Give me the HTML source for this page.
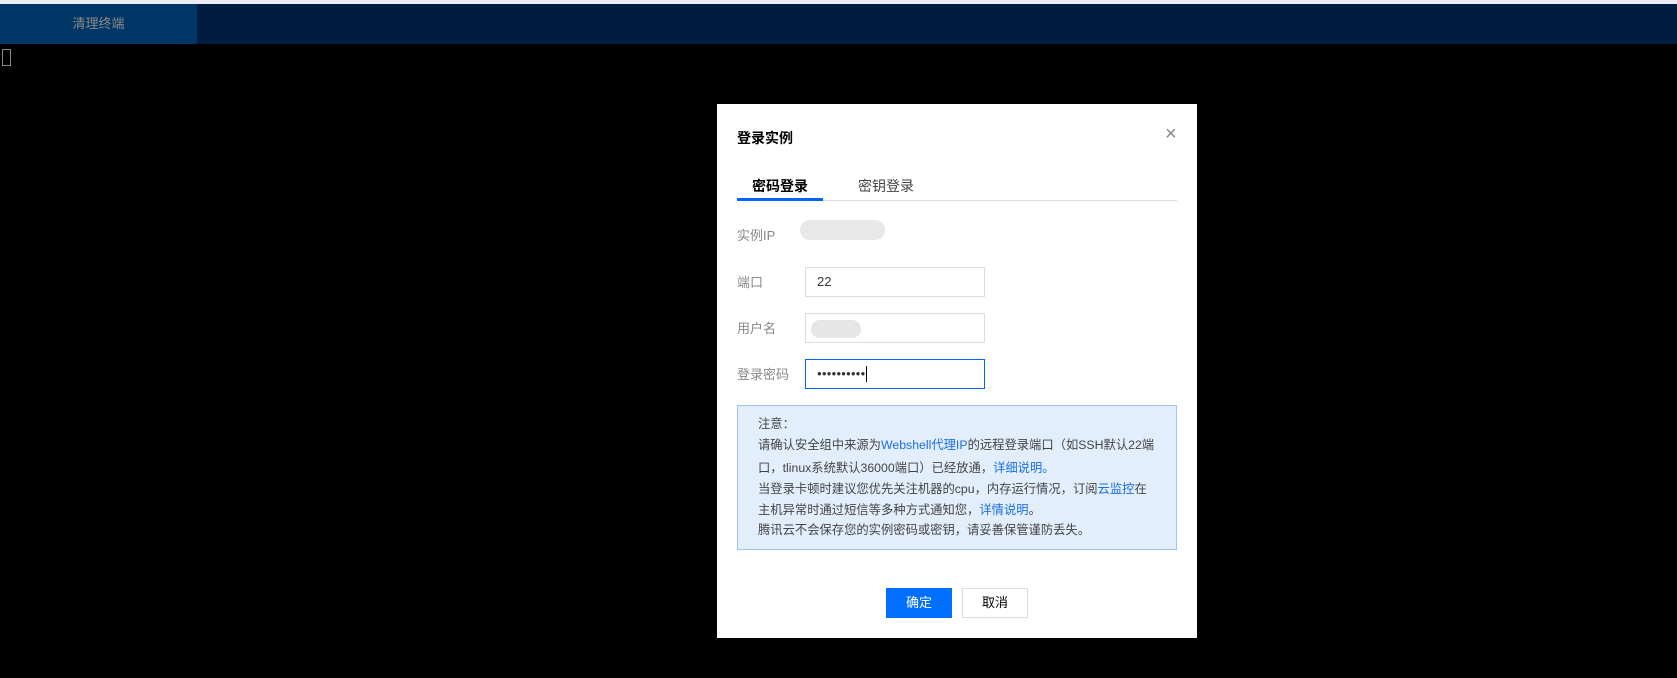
<!DOCTYPE html>
<html><head><meta charset="utf-8"><style>
*{margin:0;padding:0;box-sizing:border-box}
body{width:1677px;height:678px;background:#000;position:relative;overflow:hidden;font-family:"Liberation Sans","Noto Sans CJK SC",sans-serif;font-size:13px}
.a{position:absolute}
.top{left:0;top:0;width:1677px;height:4px;background:#eceef3}
.bar{left:0;top:4px;width:1677px;height:40px;background:#001d3f}
.tab{left:0;top:4px;width:197px;height:40px;background:#003766;color:#8a8a8a;text-align:center;line-height:40px;font-size:13px}
.cur{left:2px;top:49px;width:9px;height:17px;border:1px solid #888}
.dlg{left:717px;top:104px;width:480px;height:534px;background:#fff}
.lbl{color:#888;font-size:13px}
.inp{width:180px;height:30px;border:1px solid #ddd;padding-left:11px;line-height:28px;color:#333}
.note{left:20px;top:301px;width:440px;height:145px;background:#e3eefd;border:1px solid #9dc3fa;padding:8px 0 0 20px;color:#444;font-size:12.3px;line-height:20.5px;white-space:nowrap}
.note b{font-weight:normal;color:#1a6fe8}
</style></head><body>
<div class="a top"></div><div class="a bar"></div>
<div class="a tab">清理终端</div>
<div class="a cur"></div>
<div class="a dlg">
 <div class="a" style="left:20px;top:24px;font-size:14px;font-weight:bold;color:#000">登录实例</div>
 <div class="a" style="left:448px;top:20px;font-size:20px;color:#888;line-height:20px">×</div>
 <div class="a" style="left:20px;top:96px;width:440px;height:1px;background:#ddd"></div>
 <div class="a" style="left:20px;top:94px;width:86px;height:3px;background:#0066ff"></div>
 <div class="a" style="left:35px;top:72px;font-size:14px;font-weight:bold;color:#000">密码登录</div>
 <div class="a" style="left:141px;top:72px;font-size:14px;color:#444">密钥登录</div>
 <div class="a lbl" style="left:20px;top:121px">实例IP</div>
 <div class="a" style="left:83px;top:116px;width:85px;height:20px;background:#e8e8e8;border-radius:10px"></div>
 <div class="a lbl" style="left:20px;top:168px">端口</div>
 <div class="a inp" style="left:88px;top:163px">22</div>
 <div class="a lbl" style="left:20px;top:214px">用户名</div>
 <div class="a inp" style="left:88px;top:209px"><div class="a" style="left:5px;top:6px;width:50px;height:18px;background:#e6e6e6;border-radius:9px"></div></div>
 <div class="a lbl" style="left:20px;top:260px">登录密码</div>
 <div class="a inp" style="left:88px;top:255px;border-color:#0066ff;font-size:8px;letter-spacing:0">●●●●●●●●●●<span style="display:inline-block;width:1px;height:16px;background:#000;vertical-align:middle;margin-left:1px"></span></div>
 <div class="a note">注意：<br>请确认安全组中来源为<b>Webshell代理IP</b>的远程登录端口（如SSH默认22端<br><span style="display:inline-block;margin-top:2px;line-height:22px">口，tlinux系统默认36000端口）已经放通，<b>详细说明。</b></span><br>当登录卡顿时建议您优先关注机器的cpu，内存运行情况，订阅<b>云监控</b>在<br>主机异常时通过短信等多种方式通知您，<b>详情说明</b>。<br>腾讯云不会保存您的实例密码或密钥，请妥善保管谨防丢失。</div>
 <div class="a" style="left:169px;top:484px;width:66px;height:30px;background:#006eff;color:#fff;text-align:center;line-height:30px">确定</div>
 <div class="a" style="left:245px;top:484px;width:66px;height:30px;border:1px solid #ddd;color:#000;text-align:center;line-height:28px">取消</div>
</div>
</body></html>
